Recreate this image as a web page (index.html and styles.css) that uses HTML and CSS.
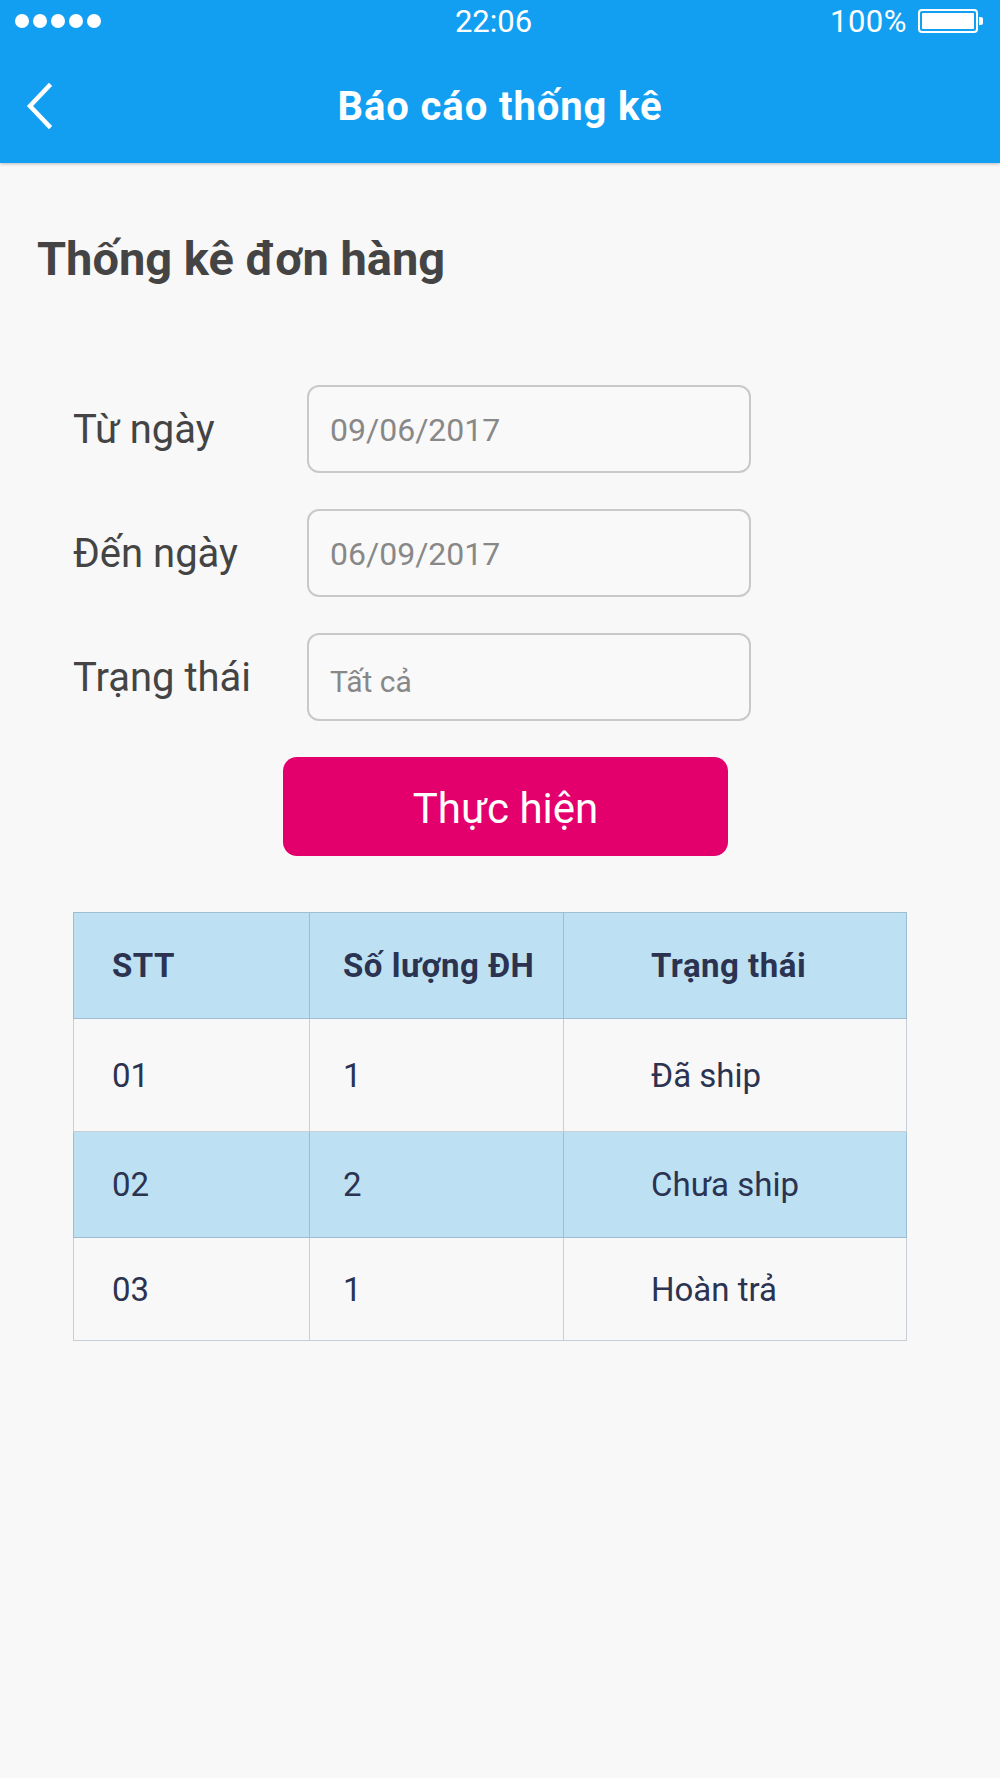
FILE: index.html
```html
<!DOCTYPE html>
<html lang="vi">
<head>
    <meta charset="UTF-8">
    <meta name="viewport" content="width=device-width, initial-scale=1.0">
    <title>Báo cáo thống kê</title>
    <link rel="stylesheet" href="styles.css">
</head>
<body>

    <!-- Status bar + navigation -->
    <div class="header">
        <div class="status-bar">
            <div class="signal">
                <span></span><span></span><span></span><span></span><span></span>
            </div>
            <div class="clock">22:06</div>
            <div class="battery-info">
                <span>100%</span>
                <div class="battery"><div class="battery-level"></div></div>
            </div>
        </div>
        <div class="nav-bar">
            <div class="back">
                <svg width="30" height="48" viewBox="0 0 30 48">
                    <polyline points="25,4 6,24 25,44" fill="none" stroke="#fff" stroke-width="4.5" stroke-linecap="square"/>
                </svg>
            </div>
            <div class="title">Báo cáo thống kê</div>
            <div></div>
        </div>
    </div>

    <div class="content">
        <h1>Thống kê đơn hàng</h1>

        <!-- Filter form -->
        <div class="filter">
            <label>Từ ngày</label>
            <div class="field">09/06/2017</div>

            <label>Đến ngày</label>
            <div class="field">06/09/2017</div>

            <label>Trạng thái</label>
            <div class="field small">Tất cả</div>
        </div>

        <button class="submit">Thực hiện</button>

        <!-- Result table -->
        <table class="report">
            <thead>
                <tr>
                    <th>STT</th>
                    <th>Số lượng ĐH</th>
                    <th>Trạng thái</th>
                </tr>
            </thead>
            <tbody>
                <tr>
                    <td>01</td>
                    <td>1</td>
                    <td>Đã ship</td>
                </tr>
                <tr class="alt">
                    <td>02</td>
                    <td>2</td>
                    <td>Chưa ship</td>
                </tr>
                <tr>
                    <td>03</td>
                    <td>1</td>
                    <td>Hoàn trả</td>
                </tr>
            </tbody>
        </table>
    </div>

</body>
</html>
```

FILE: styles.css
```css
body {
    margin: 0;
    background-color: #f8f8f8;
    font-family: Roboto, "Liberation Sans", sans-serif;
    color: #444;
}
.header {
    background-color: #139ff1;
    box-shadow: 0 1px 3px rgba(0, 0, 0, 0.25);
    color: #fff;
}
.status-bar {
    height: 42px;
    display: grid;
    grid-template-columns: 1fr auto 1fr;
    align-items: center;
    padding: 0 22px 0 15px;
    font-size: 31px;
    font-weight: 400;
}
.signal {
    display: flex;
    gap: 4px;
}
.signal span {
    width: 14px;
    height: 14px;
    border-radius: 50%;
    background-color: #fff;
}
.clock {
    margin-left: -6px;
}
.battery-info {
    display: flex;
    align-items: center;
    justify-content: flex-end;
    gap: 11px;
    letter-spacing: 0.5px;
}
.battery {
    position: relative;
    width: 60px;
    height: 24px;
    box-sizing: border-box;
    border: 2px solid #fff;
    border-radius: 4px;
    padding: 2px;
}
.battery::after {
    content: "";
    position: absolute;
    right: -7px;
    top: 6px;
    width: 4px;
    height: 8px;
    border-radius: 0 2px 2px 0;
    background-color: #fff;
}
.battery-level {
    height: 100%;
    background-color: #fff;
    border-radius: 1px;
}
.nav-bar {
    height: 121px;
    display: grid;
    grid-template-columns: 1fr auto 1fr;
    align-items: center;
}
.back svg {
    display: block;
    margin: 6px 0 0 24px;
}
.title {
    font-size: 40px;
    font-weight: 700;
    letter-spacing: 0.9px;
    margin-top: 8px;
}
.content {
    padding: 69px 0 0 37px;
}
h1 {
    margin: 0;
    font-size: 47px;
    line-height: 54px;
    font-weight: 700;
    color: #444;
}
.filter {
    margin-top: 99px;
    margin-left: 36px;
    display: grid;
    grid-template-columns: 234px 444px;
    row-gap: 36px;
    align-items: center;
}
.filter label {
    font-size: 40px;
    color: #444;
}
.field {
    height: 88px;
    box-sizing: border-box;
    display: flex;
    align-items: center;
    padding: 2px 21px 0;
    border: 2px solid #c9c9c9;
    border-radius: 12px;
    background-color: #f9f9f9;
    font-size: 32px;
    color: #888;
}
.field.small {
    font-size: 30px;
    padding-top: 8px;
}
.submit {
    display: block;
    margin: 36px 0 0 246px;
    width: 445px;
    height: 99px;
    border: none;
    border-radius: 14px;
    background-color: #e4006c;
    color: #fff;
    font-family: inherit;
    font-size: 42px;
    padding-top: 4px;
}
.report {
    margin: 56px 0 0 36px;
    width: 834px;
    border-collapse: collapse;
    color: #2b3350;
    font-size: 33px;
}
.report th, .report td {
    border: 1px solid #c8ced6;
    text-align: left;
    padding: 0;
}
.report th {
    height: 105px;
    background-color: #bde0f3;
    border-color: #9fbdd2;
    font-weight: 700;
    letter-spacing: 0.5px;
}
.report td {
    height: 105px;
}
.report tbody tr:first-child td {
    height: 112px;
}
.report tbody tr:last-child td {
    height: 102px;
}
.report tr.alt td {
    background-color: #bde0f3;
    border-color: #9fbdd2;
}
.report th:nth-child(1), .report td:nth-child(1) {
    width: 197px;
    padding-left: 38px;
}
.report th:nth-child(2), .report td:nth-child(2) {
    width: 220px;
    padding-left: 33px;
}
.report th:nth-child(3), .report td:nth-child(3) {
    padding-left: 87px;
}
```
